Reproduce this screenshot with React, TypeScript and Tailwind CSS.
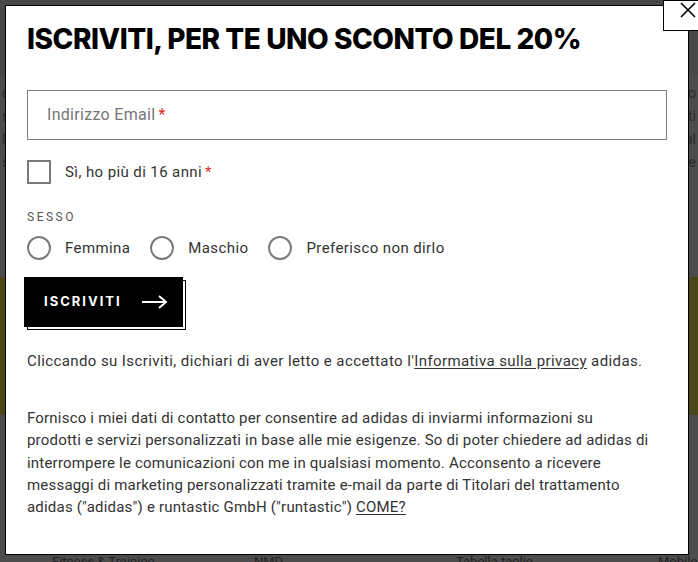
import React from "react";

const body = { fontFamily: "Roboto, 'Liberation Sans', sans-serif" };
const heading = { fontFamily: "Inter, 'Liberation Sans', sans-serif" };

const Radio = ({ label }: { label: string }) => (
  <label className="flex items-center gap-[14px]">
    <span className="w-[24px] h-[24px] rounded-full border-2 border-[#7a7a7a] bg-white" />
    <span className="text-[15px] text-[#333] tracking-[0.4px]">{label}</span>
  </label>
);

export default function App() {
  return (
    <div className="relative w-[698px] h-[562px] overflow-hidden bg-[#4a4a4a]" style={body}>
      {/* dimmed page behind the modal */}
      <div className="flex flex-col h-full">
        <div className="h-[75px] bg-[#474747]" />
        <div className="h-[202px] bg-[#4c4c4c] px-[2px] pt-[8px] flex flex-col gap-[3px] text-[14px] text-[#2a2a2a] leading-[20px]">
          <div className="flex justify-between"><span>c</span><span>o</span></div>
          <div className="flex justify-between"><span>s</span><span>ti</span></div>
          <div className="flex justify-between"><span>ll</span><span>al</span></div>
          <div className="flex justify-between"><span>st</span><span>re</span></div>
        </div>
        <div className="h-[138px] bg-[#4b4617]" />
        <div className="flex-1 bg-[#4c4c4c] flex flex-col justify-end">
          <div className="flex pl-[52px] h-[8px] text-[13px] leading-[16px] text-[#222] whitespace-nowrap">
            <span className="w-[202px] shrink-0">Fitness & Training</span>
            <span className="w-[202px] shrink-0">NMD</span>
            <span className="w-[202px] shrink-0">Tabella taglie</span>
            <span className="shrink-0">Mobile</span>
          </div>
        </div>
      </div>

      {/* modal */}
      <div className="absolute left-[5px] top-[5px] w-[684px] h-[550px] bg-white border border-black pl-[21px] pr-[21px] pt-[15px]">
        <h2
          className="text-[28px] leading-[36px] font-extrabold text-black tracking-[-0.45px]"
          style={heading}
        >
          ISCRIVITI, PER TE UNO SCONTO DEL 20%
        </h2>

        <div className="mt-[33px] h-[50px] w-[640px] border border-[#7f7f7f] flex items-center pl-[19px] text-[16px] text-[#767676] tracking-[0.3px]">
          Indirizzo Email<span className="text-[#e32b2b] ml-[3px]">*</span>
        </div>

        <label className="mt-[20px] flex items-center gap-[14px]">
          <span className="w-[24px] h-[24px] border-2 border-[#7a7a7a] bg-white" />
          <span className="text-[15px] text-[#333] tracking-[0.4px]">
            Sì, ho più di 16 anni<span className="text-[#e32b2b] ml-[3px]">*</span>
          </span>
        </label>

        <div className="mt-[26px] text-[12px] leading-[14px] tracking-[2.5px] text-[#555]">SESSO</div>

        <div className="mt-[12px] flex items-center gap-[20px]">
          <Radio label="Femmina" />
          <Radio label="Maschio" />
          <Radio label="Preferisco non dirlo" />
        </div>

        <div className="relative mt-[17px] ml-[-3px] w-[162px] h-[53px]">
          <div className="absolute left-[3px] top-[3px] w-[159px] h-[50px] border border-black" />
          <button className="absolute left-0 top-0 w-[159px] h-[50px] bg-black text-white flex items-center pl-[20px] gap-[20px]">
            <span className="text-[13px] font-bold tracking-[2px]" style={heading}>ISCRIVITI</span>
            <svg width="26" height="14" viewBox="0 0 26 14" fill="none" stroke="white" strokeWidth="2">
              <path d="M0 7h24M17 1l7 6-7 6" />
            </svg>
          </button>
        </div>

        <p className="mt-[20px] text-[15px] leading-[22px] text-[#333] tracking-[0.4px]">
          Cliccando su Iscriviti, dichiari di aver letto e accettato l'
          <span className="underline underline-offset-2">Informativa sulla privacy</span> adidas.
        </p>

        <p className="mt-[35px] text-[15px] leading-[22.3px] text-[#333] tracking-[0.2px]">
          Fornisco i miei dati di contatto per consentire ad adidas di inviarmi informazioni su
          <br />
          prodotti e servizi personalizzati in base alle mie esigenze. So di poter chiedere ad adidas di
          <br />
          interrompere le comunicazioni con me in qualsiasi momento. Acconsento a ricevere
          <br />
          messaggi di marketing personalizzati tramite e-mail da parte di Titolari del trattamento
          <br />
          adidas ("adidas") e runtastic GmbH ("runtastic") <span className="underline underline-offset-2">COME?</span>
        </p>
      </div>

      {/* close button */}
      <button className="absolute left-[663px] top-0 w-[40px] h-[31px] bg-white border border-black flex items-start pl-[16px] pt-[1px]">
        <svg width="16" height="16" viewBox="0 0 16 16" stroke="black" strokeWidth="1.6">
          <path d="M1 1l14 14M15 1L1 15" />
        </svg>
      </button>
    </div>
  );
}
